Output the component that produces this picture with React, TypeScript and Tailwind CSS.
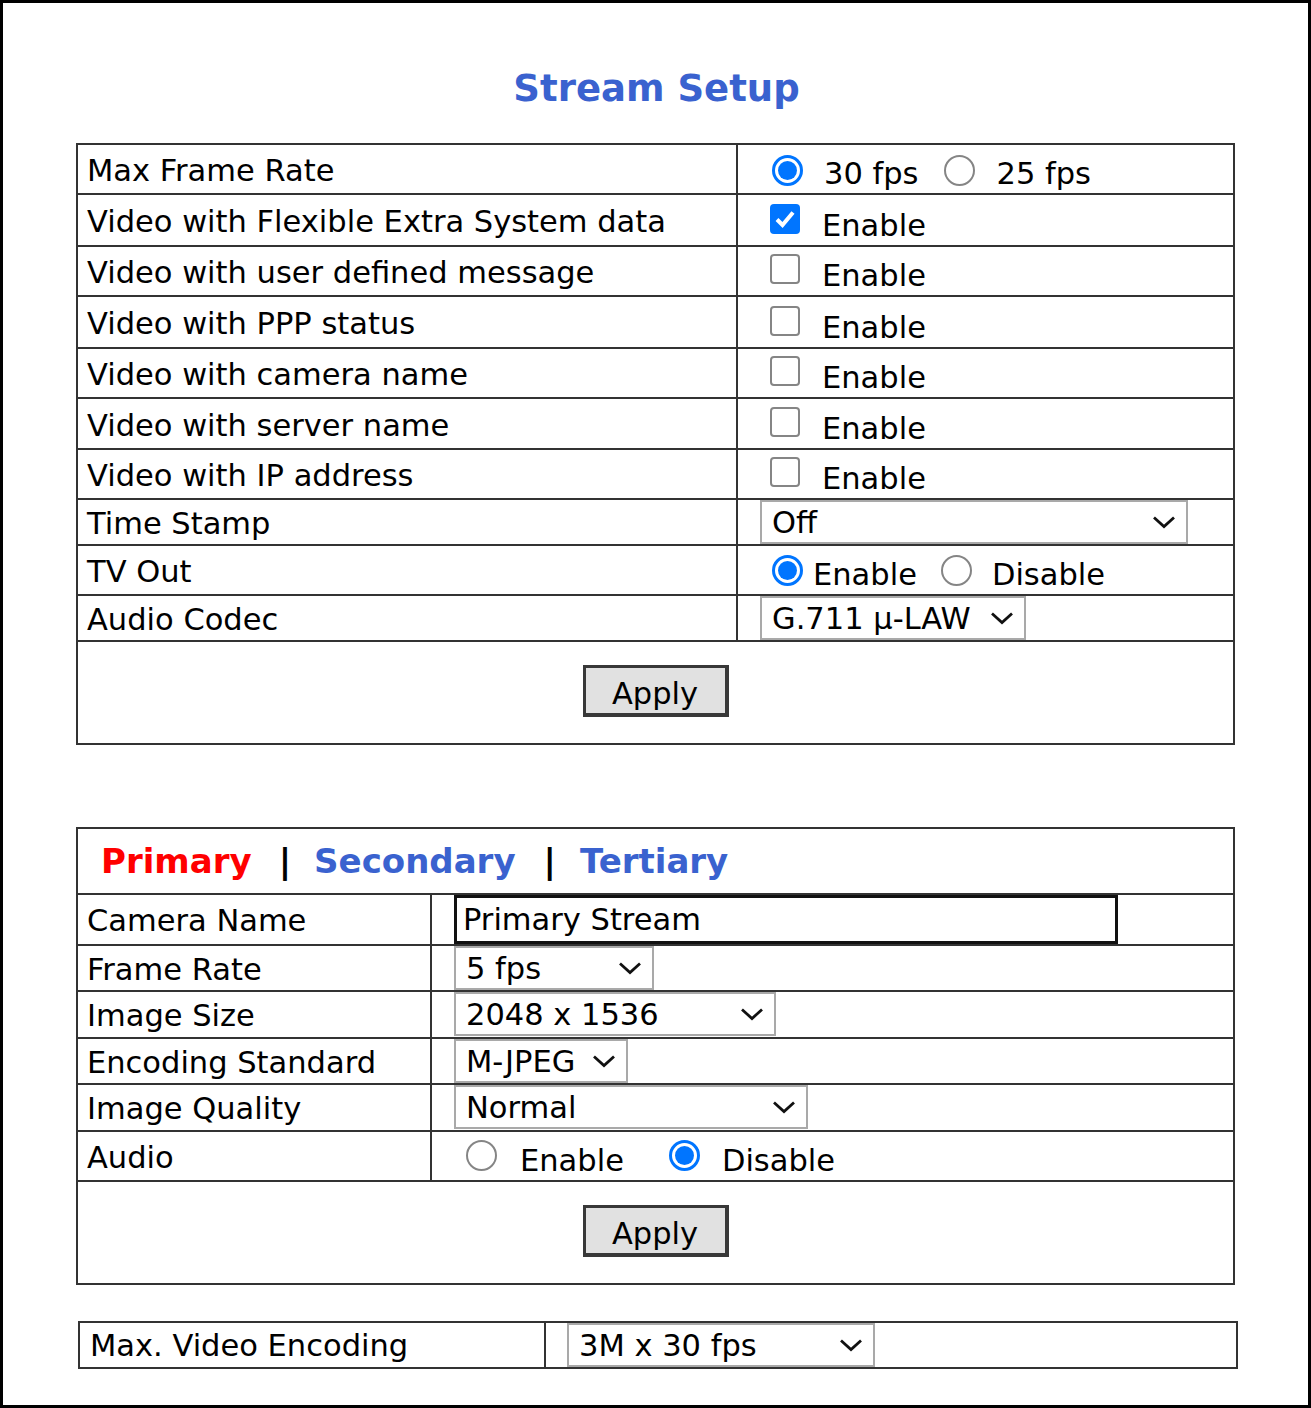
import React from "react";

const Chevron = () => (
  <svg width="24" height="14" viewBox="0 0 24 14" className="shrink-0">
    <path d="M2 2.5 L12 11.5 L22 2.5" fill="none" stroke="#111" strokeWidth="2.8" />
  </svg>
);

const Radio = ({ checked }: { checked?: boolean }) =>
  checked ? (
    <div className="w-[31px] h-[31px] rounded-full border-[3px] border-[#0075ff] bg-white flex items-center justify-center shrink-0">
      <div className="w-[19px] h-[19px] rounded-full bg-[#0075ff]" />
    </div>
  ) : (
    <div className="w-[31px] h-[31px] rounded-full border-2 border-[#858585] bg-white shrink-0" />
  );

const Checkbox = ({ checked }: { checked?: boolean }) =>
  checked ? (
    <div className="w-[30px] h-[30px] rounded-[4px] bg-[#0075ff] flex items-center justify-center shrink-0">
      <svg width="24" height="24" viewBox="0 0 24 24">
        <path d="M4 12.5 L9.5 18 L20 5.5" fill="none" stroke="white" strokeWidth="4" />
      </svg>
    </div>
  ) : (
    <div className="w-[30px] h-[30px] rounded-[4px] border-2 border-[#858585] bg-white shrink-0" />
  );

const Select = ({ value, w }: { value: string; w: string }) => (
  <div className={`${w} h-[44px] border-2 border-[#a9a9a9] bg-white flex items-center justify-between pl-[10px] pr-[10px]`}>
    <span className="leading-none pt-[2px]">{value}</span>
    <Chevron />
  </div>
);

const ApplyButton = () => (
  <div className="w-[146px] h-[52px] bg-[#e1e1e1] border-t-[3px] border-l-[3px] border-r-[4px] border-b-[4px] border-[#383838] flex items-center justify-center">
    <span className="text-[30.5px] leading-none pt-[7px]">Apply</span>
  </div>
);

type Row1 = { label: string; h: string; right: React.ReactNode; kind: "ctrl" | "select" };

const T = ({ children, ml }: { children: React.ReactNode; ml: string }) => (
  <span className={`${ml} mb-[-4px]`}>{children}</span>
);

const EnableCheck = ({ checked }: { checked?: boolean }) => (
  <div className="flex items-end pl-[32px]">
    <div className="mb-[11px]">
      <Checkbox checked={checked} />
    </div>
    <T ml="ml-[22px]">Enable</T>
  </div>
);

export default function App() {
  const rows1: Row1[] = [
    {
      label: "Max Frame Rate",
      h: "h-[50px]",
      kind: "ctrl",
      right: (
        <div className="flex items-end pl-[34px]">
          <div className="mb-[7px]">
            <Radio checked />
          </div>
          <T ml="ml-[21px]">30 fps</T>
          <div className="mb-[7px] ml-[25px]">
            <Radio />
          </div>
          <T ml="ml-[22px]">25 fps</T>
        </div>
      ),
    },
    { label: "Video with Flexible Extra System data", h: "h-[52px]", kind: "ctrl", right: <EnableCheck checked /> },
    { label: "Video with user defined message", h: "h-[50px]", kind: "ctrl", right: <EnableCheck /> },
    { label: "Video with PPP status", h: "h-[52px]", kind: "ctrl", right: <EnableCheck /> },
    { label: "Video with camera name", h: "h-[50px]", kind: "ctrl", right: <EnableCheck /> },
    { label: "Video with server name", h: "h-[51px]", kind: "ctrl", right: <EnableCheck /> },
    { label: "Video with IP address", h: "h-[50px]", kind: "ctrl", right: <EnableCheck /> },
    {
      label: "Time Stamp",
      h: "h-[46px]",
      kind: "select",
      right: (
        <div className="pl-[22px]">
          <Select value="Off" w="w-[428px]" />
        </div>
      ),
    },
    {
      label: "TV Out",
      h: "h-[50px]",
      kind: "ctrl",
      right: (
        <div className="flex items-end pl-[34px]">
          <div className="mb-[8px]">
            <Radio checked />
          </div>
          <T ml="ml-[10px]">Enable</T>
          <div className="mb-[8px] ml-[24px]">
            <Radio />
          </div>
          <T ml="ml-[20px]">Disable</T>
        </div>
      ),
    },
    {
      label: "Audio Codec",
      h: "h-[46px]",
      kind: "select",
      right: (
        <div className="pl-[22px]">
          <Select value="G.711 µ-LAW" w="w-[266px]" />
        </div>
      ),
    },
  ];

  const rows2: Row1[] = [
    {
      label: "Frame Rate",
      h: "h-[46px]",
      kind: "select",
      right: (
        <div className="pl-[22px]">
          <Select value="5 fps" w="w-[200px]" />
        </div>
      ),
    },
    {
      label: "Image Size",
      h: "h-[47px]",
      kind: "select",
      right: (
        <div className="pl-[22px]">
          <Select value="2048 x 1536" w="w-[322px]" />
        </div>
      ),
    },
    {
      label: "Encoding Standard",
      h: "h-[46px]",
      kind: "select",
      right: (
        <div className="pl-[22px]">
          <Select value="M-JPEG" w="w-[174px]" />
        </div>
      ),
    },
    {
      label: "Image Quality",
      h: "h-[47px]",
      kind: "select",
      right: (
        <div className="pl-[22px]">
          <Select value="Normal" w="w-[354px]" />
        </div>
      ),
    },
    {
      label: "Audio",
      h: "h-[50px]",
      kind: "ctrl",
      right: (
        <div className="flex items-end pl-[34px]">
          <div className="mb-[9px]">
            <Radio />
          </div>
          <T ml="ml-[23px]">Enable</T>
          <div className="mb-[9px] ml-[45px]">
            <Radio checked />
          </div>
          <T ml="ml-[22px]">Disable</T>
        </div>
      ),
    },
  ];

  return (
    <div className="w-[1311px] h-[1408px] border-[3px] border-black bg-white text-black font-['DejaVu_Sans',sans-serif] text-[30.5px] overflow-hidden">
      <h1 className="mt-[64px] text-center font-bold text-[37px] text-[#3a62cf] leading-[43px] pl-[2px]">
        Stream Setup
      </h1>

      {/* Table 1 */}
      <div className="mt-[33px] ml-[73px] w-[1159px] border-2 border-[#333]">
        {rows1.map((r) => (
          <div key={r.label} className={`flex ${r.h} border-b-2 border-[#333]`}>
            <div className="w-[660px] border-r-2 border-[#333] flex items-center pl-[9px] pt-[4px]">
              <span>{r.label}</span>
            </div>
            <div className={`flex-1 flex ${r.kind === "select" ? "items-start" : "items-end"}`}>{r.right}</div>
          </div>
        ))}
        <div className="h-[101px] flex justify-center pt-[23px]">
          <ApplyButton />
        </div>
      </div>

      {/* Table 2 */}
      <div className="mt-[82px] ml-[73px] w-[1159px] border-2 border-[#333]">
        <div className="h-[66px] border-b-2 border-[#333] flex items-center pl-[23px] font-bold text-[34px] pt-[1px]">
          <span className="text-[#ff0000]">Primary</span>
          <span className="ml-[27px]">|</span>
          <span className="ml-[23px] text-[#3a62cf]">Secondary</span>
          <span className="ml-[28px]">|</span>
          <span className="ml-[24px] text-[#3a62cf]">Tertiary</span>
        </div>
        <div className="flex h-[51px] border-b-2 border-[#333]">
          <div className="w-[354px] border-r-2 border-[#333] flex items-center pl-[9px] pt-[3px]">
            <span>Camera Name</span>
          </div>
          <div className="flex-1 flex items-start pl-[22px]">
            <div className="w-[664px] h-[49px] border-[3px] border-[#111] flex items-center pl-[6px]">
              <span className="leading-none pt-[2px]">Primary Stream</span>
            </div>
          </div>
        </div>
        {rows2.map((r) => (
          <div key={r.label} className={`flex ${r.h} border-b-2 border-[#333]`}>
            <div className="w-[354px] border-r-2 border-[#333] flex items-center pl-[9px] pt-[3px]">
              <span>{r.label}</span>
            </div>
            <div className={`flex-1 flex ${r.kind === "select" ? "items-start" : "items-end"}`}>{r.right}</div>
          </div>
        ))}
        <div className="h-[101px] flex justify-center pt-[23px]">
          <ApplyButton />
        </div>
      </div>

      {/* Table 3 */}
      <div className="mt-[36px] ml-[75px] w-[1160px] h-[48px] border-2 border-[#333] flex">
        <div className="w-[466px] border-r-2 border-[#333] flex items-center pl-[10px] pt-[2px]">
          <span>Max. Video Encoding</span>
        </div>
        <div className="flex-1 flex items-start pl-[21px]">
          <Select value="3M x 30 fps" w="w-[308px]" />
        </div>
      </div>
    </div>
  );
}
